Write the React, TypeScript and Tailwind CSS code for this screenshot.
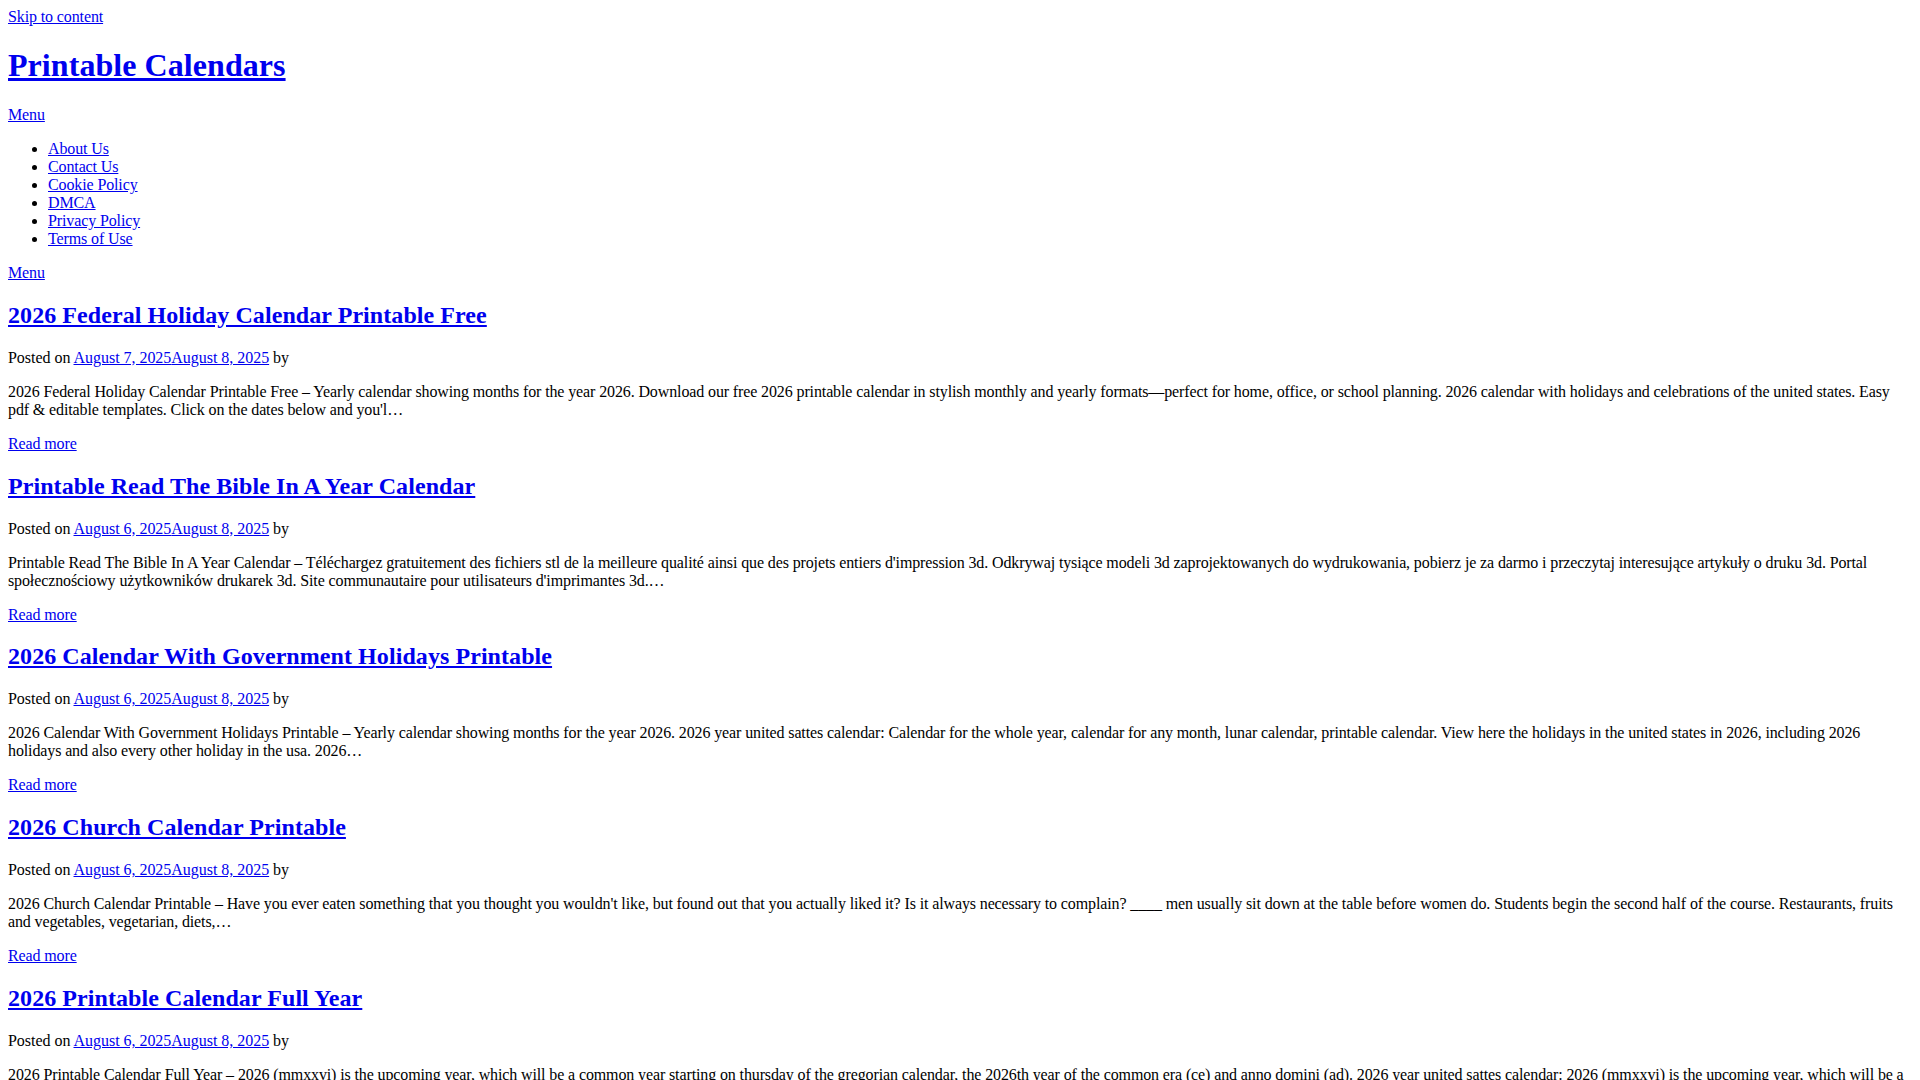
const menuItems = [
  "About Us",
  "Contact Us",
  "Cookie Policy",
  "DMCA",
  "Privacy Policy",
  "Terms of Use",
];

interface Post {
  title: string;
  published: string;
  updated: string;
  excerpt: string;
}

const posts: Post[] = [
  {
    title: "2026 Federal Holiday Calendar Printable Free",
    published: "August 7, 2025",
    updated: "August 8, 2025",
    excerpt:
      "2026 Federal Holiday Calendar Printable Free – Yearly calendar showing months for the year 2026. Download our free 2026 printable calendar in stylish monthly and yearly formats—perfect for home, office, or school planning. 2026 calendar with holidays and celebrations of the united states. Easy pdf & editable templates. Click on the dates below and you'l…",
  },
  {
    title: "Printable Read The Bible In A Year Calendar",
    published: "August 6, 2025",
    updated: "August 8, 2025",
    excerpt:
      "Printable Read The Bible In A Year Calendar – Téléchargez gratuitement des fichiers stl de la meilleure qualité ainsi que des projets entiers d'impression 3d. Odkrywaj tysiące modeli 3d zaprojektowanych do wydrukowania, pobierz je za darmo i przeczytaj interesujące artykuły o druku 3d. Portal społecznościowy użytkowników drukarek 3d. Site communautaire pour utilisateurs d'imprimantes 3d.…",
  },
  {
    title: "2026 Calendar With Government Holidays Printable",
    published: "August 6, 2025",
    updated: "August 8, 2025",
    excerpt:
      "2026 Calendar With Government Holidays Printable – Yearly calendar showing months for the year 2026. 2026 year united sattes calendar: Calendar for the whole year, calendar for any month, lunar calendar, printable calendar. View here the holidays in the united states in 2026, including 2026 holidays and also every other holiday in the usa. 2026…",
  },
  {
    title: "2026 Church Calendar Printable",
    published: "August 6, 2025",
    updated: "August 8, 2025",
    excerpt:
      "2026 Church Calendar Printable – Have you ever eaten something that you thought you wouldn't like, but found out that you actually liked it? Is it always necessary to complain? ____ men usually sit down at the table before women do. Students begin the second half of the course. Restaurants, fruits and vegetables, vegetarian, diets,…",
  },
  {
    title: "2026 Printable Calendar Full Year",
    published: "August 6, 2025",
    updated: "August 8, 2025",
    excerpt:
      "2026 Printable Calendar Full Year – 2026 (mmxxvi) is the upcoming year, which will be a common year starting on thursday of the gregorian calendar, the 2026th year of the common era (ce) and anno domini (ad). 2026 year united sattes calendar: 2026 (mmxxvi) is the upcoming year, which will be a common year starting on thursday. Calendar for the whole year, printable calendar…",
  },
  {
    title: "2026 Monthly Calendar Printable",
    published: "August 5, 2025",
    updated: "August 8, 2025",
    excerpt:
      "2026 Monthly Calendar Printable – Free printable monthly calendars for 2026 with holidays. Plan your days with our blank and editable templates in pdf, word and image formats. Each month is on a separate page, ready to print on letter or a4 paper…",
  },
  {
    title: "2026 School Year Calendar Printable",
    published: "August 5, 2025",
    updated: "August 8, 2025",
    excerpt:
      "2026 School Year Calendar Printable – Keep track of school holidays, term dates and important events with our free school year calendar. Available in portrait and landscape layouts, easy to print and share with students and parents…",
  },
  {
    title: "2026 Blank Calendar Printable",
    published: "August 4, 2025",
    updated: "August 8, 2025",
    excerpt:
      "2026 Blank Calendar Printable – Simple blank calendar templates for the year 2026. Write your own notes, appointments and reminders. Download and print for free at home or in the office…",
  },
];

function Link({ children }: { children: React.ReactNode }) {
  return (
    <a href="#" className="text-[#0000ee] underline">
      {children}
    </a>
  );
}

function Article({ post }: { post: Post }) {
  return (
    <article>
      <header>
        <h2 className="my-[19.92px] text-[24px] font-bold tracking-[0.07px]">
          <Link>{post.title}</Link>
        </h2>
        <div className="tracking-[-0.03px]">
          Posted on{" "}
          <Link>
            {post.published}
            {post.updated}
          </Link>{" "}
          by
        </div>
      </header>
      <div>
        <p className="my-4">{post.excerpt}</p>
        <p className="my-4">
          <Link>Read more</Link>
        </p>
      </div>
    </article>
  );
}

export default function App() {
  return (
    <div className="bg-white py-2 pl-2 pr-4 font-['Liberation_Serif',serif] text-[16px] leading-[normal] tracking-[-0.12px] text-black">
      <Link>Skip to content</Link>
      <header>
        <h1 className="my-[21.44px] text-[32px] font-bold tracking-[0.06px]">
          <Link>Printable Calendars</Link>
        </h1>
        <nav>
          <Link>Menu</Link>
          <ul className="my-4 list-disc pl-10">
            {menuItems.map((item) => (
              <li key={item}>
                <Link>{item}</Link>
              </li>
            ))}
          </ul>
        </nav>
      </header>
      <main>
        <Link>Menu</Link>
        {posts.map((post) => (
          <Article key={post.title} post={post} />
        ))}
      </main>
    </div>
  );
}
